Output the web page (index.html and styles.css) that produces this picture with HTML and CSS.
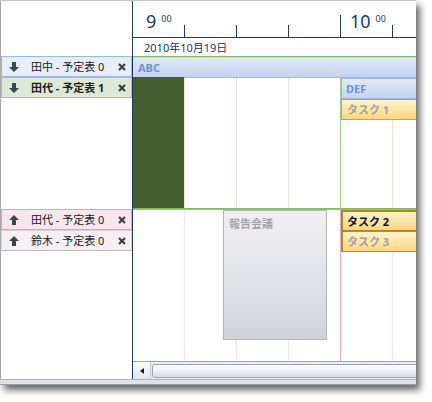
FILE: index.html
```html
<!DOCTYPE html>
<html lang="ja">
<head>
<meta charset="utf-8">
<title>Schedule</title>
<link rel="stylesheet" href="styles.css">
</head>
<body>
<div class="frame">
  <div class="main">
    <div class="left">
      <div class="left-head"></div>
      <div class="group">
        <div class="row r-blue">
          <svg class="arr" viewBox="0 0 10 10"><path d="M3 0h4v5h3l-5 5-5-5h3z"/></svg>
          <span class="label">田中 - 予定表 0</span>
          <svg class="close" viewBox="0 0 8 8"><path d="M1 1l6 6M7 1l-6 6"/></svg>
        </div>
        <div class="row r-green bold">
          <svg class="arr" viewBox="0 0 10 10"><path d="M3 0h4v5h3l-5 5-5-5h3z"/></svg>
          <span class="label">田代 - 予定表 1</span>
          <svg class="close" viewBox="0 0 8 8"><path d="M1 1l6 6M7 1l-6 6"/></svg>
        </div>
      </div>
      <div class="group">
        <div class="row r-pink">
          <svg class="arr" viewBox="0 0 10 10"><path d="M3 10h4v-5h3l-5-5-5 5h3z"/></svg>
          <span class="label">田代 - 予定表 0</span>
          <svg class="close" viewBox="0 0 8 8"><path d="M1 1l6 6M7 1l-6 6"/></svg>
        </div>
        <div class="row r-pale">
          <svg class="arr" viewBox="0 0 10 10"><path d="M3 10h4v-5h3l-5-5-5 5h3z"/></svg>
          <span class="label">鈴木 - 予定表 0</span>
          <svg class="close" viewBox="0 0 8 8"><path d="M1 1l6 6M7 1l-6 6"/></svg>
        </div>
      </div>
      <div class="left-scroll"></div>
    </div>
    <div class="timeline">
      <div class="ruler">
        <div class="hour first"><span class="hnum">9</span><span class="hmin">00</span></div>
        <div class="hour"><span class="hnum">10</span><span class="hmin">00</span></div>
      </div>
      <div class="dateline">2010年10月19日</div>
      <div class="sec s1">
        <div class="ev bar-blue ev-abc">ABC</div>
        <div class="ev block-dark"></div>
        <div class="ev bar-blue ev-def">DEF</div>
        <div class="ev task ev-t1">タスク 1</div>
      </div>
      <div class="sec s2">
        <div class="ev meeting">報告会議</div>
        <div class="ev task ev-t2">タスク 2</div>
        <div class="ev task ev-t3">タスク 3</div>
      </div>
      <div class="hscroll">
        <div class="sbtn"><span class="tri"></span></div>
        <div class="thumb"></div>
      </div>
    </div>
  </div>
  <div class="foot"></div>
</div>
</body>
</html>
```

FILE: styles.css
```css
* { box-sizing: border-box; }
html, body { margin: 0; padding: 0; background: #fff; }
body {
  width: 432px;
  height: 402px;
  overflow: hidden;
  font-family: "Noto Sans", "Noto Sans CJK JP", sans-serif;
}
.frame {
  width: 416px;
  border-top: 1px solid #c9c3c6;
  background: #fff;
  box-shadow: 4px 5px 7px rgba(0, 0, 0, 0.6);
}
.main {
  display: flex;
  height: 378px;
  border-left: 1px solid #a9a9a9;
}
.left {
  width: 131px;
  display: flex;
  flex-direction: column;
}
.left-head { height: 55px; }
.group { height: 153px; }
.left-scroll { height: 17px; }
.row {
  height: 21px;
  display: flex;
  align-items: center;
  padding: 0 5px 0 7px;
  border: 1px solid;
  font-size: 11px;
  line-height: 1;
  color: #1c1c1c;
}
.row .arr { width: 10px; height: 10px; fill: #3b4550; flex: none; }
.row .label { margin-left: 12px; flex: 1; white-space: nowrap; }
.row .close { width: 8px; height: 8px; stroke: #3a4048; stroke-width: 2.2; flex: none; }
.row.bold { font-weight: bold; }
.r-blue { background: #e6eef9; border-color: #9cb8e4; }
.r-green { background: #dee8d4; border-color: #a8c596; }
.r-pink { background: #f7e6ec; border-color: #dca4b8; }
.r-pale { background: #f6f0f4; border-color: #e2ccd6 #e2ccd6 #b8b8b8; }

.timeline {
  flex: 1;
  border-left: 1px solid #1e3a5c;
  display: flex;
  flex-direction: column;
  min-width: 0;
  overflow: hidden;
}
.ruler {
  height: 37px;
  flex: none;
  display: flex;
  overflow: hidden;
  border-bottom: 1px solid #1e3a5c;
  color: #1e3a5c;
  background:
    repeating-linear-gradient(90deg, transparent 0 207px, #1e3a5c 207px 208px) left bottom / 100% 22px no-repeat,
    repeating-linear-gradient(90deg, transparent 0 51px, #1e3a5c 51px 52px) left bottom / 100% 12px no-repeat;
}
.hour {
  width: 208px;
  flex: none;
  padding: 11px 0 0 9px;
  display: flex;
  align-items: flex-start;
}
.hour.first { padding-left: 13px; }
.hnum { font-size: 18px; line-height: 18px; }
.hmin { font-size: 9px; line-height: 9px; margin-left: 5px; margin-top: 2px; }
.dateline {
  height: 18px;
  flex: none;
  padding: 1px 0 0 11px;
  font-size: 11px;
  line-height: 18px;
  color: #26364a;
  white-space: nowrap;
}
.sec {
  position: relative;
  height: 153px;
  flex: none;
  overflow: hidden;
}
.s1 {
  border-top: 1px solid #86b868;
  border-bottom: 1px solid #86b868;
  background:
    repeating-linear-gradient(90deg, transparent 0 207px, #a3cc8c 207px 208px),
    repeating-linear-gradient(90deg, transparent 0 51px, #e1ead7 51px 52px),
    #fff;
}
.s2 {
  border-top: 1px solid #d994ac;
  border-bottom: 1px solid #d48ea6;
  background:
    repeating-linear-gradient(90deg, transparent 0 207px, #e3a9bd 207px 208px),
    repeating-linear-gradient(90deg, transparent 0 51px, #f9e3eb 51px 52px),
    #fff;
}
.ev {
  position: absolute;
  font-size: 11px;
  font-weight: bold;
  line-height: 1;
  white-space: nowrap;
}
.bar-blue {
  background: linear-gradient(#e1eaf9, #c3d3ef);
  color: #6d91d2;
  border: 1px solid #9db6e2;
  border-right: 0;
  display: flex;
  align-items: center;
  padding-left: 4px;
}
.ev-abc { left: 0; right: 0; top: 0; height: 21px; border-left-color: #c9d7f0; border-top-color: #c9d7f0; }
.ev-def { left: 208px; right: 0; top: 21px; height: 21px; }
.block-dark { left: 0; top: 20px; width: 51px; bottom: 0; background: #435f30; }
.task {
  background: linear-gradient(#fff4cc, #ffd57f);
  border: 1px solid #cfa046;
  border-right: 0;
  color: #a3a3a3;
  display: flex;
  align-items: center;
  padding-left: 5px;
  left: 208px;
  right: 0;
  height: 21px;
}
.ev-t1 { top: 42px; }
.ev-t2 { top: 0; color: #111; border-color: #b98214; border-width: 2px 0 1px 2px; padding-left: 4px; }
.ev-t3 { top: 21px; border-color: #bf8a24; border-left-width: 2px; padding-left: 4px; }
.meeting {
  left: 90px;
  top: 0;
  width: 104px;
  height: 130px;
  background: linear-gradient(#f1eef2, #e3e5eb 45%, #dbdee4 70%, #cfd2d9);
  border: 1px solid #b3b5bb;
  color: #a2a5ab;
  padding: 7px 0 0 5px;
}
.hscroll {
  height: 17px;
  flex: none;
  display: flex;
  align-items: center;
  overflow: hidden;
  background: #e9ecf0;
}
.sbtn {
  width: 18px;
  height: 17px;
  flex: none;
  background: linear-gradient(#fafbfc, #e2e6eb);
  border-right: 1px solid #c4cad2;
  display: flex;
  align-items: center;
  justify-content: center;
}
.tri {
  width: 0;
  height: 0;
  border-top: 3px solid transparent;
  border-bottom: 3px solid transparent;
  border-right: 4px solid #1a1a1a;
}
.thumb {
  flex: none;
  width: 272px;
  height: 14px;
  margin-left: 1px;
  border: 1px solid #9ca4b0;
  border-radius: 3px;
  background: linear-gradient(#ffffff, #f1f2f5 45%, #d9dde4);
}
.foot {
  height: 6px;
  border-top: 1px solid #b6b2b6;
  border-bottom: 1px solid #9aa2aa;
  background: #dde3e9;
}
```
